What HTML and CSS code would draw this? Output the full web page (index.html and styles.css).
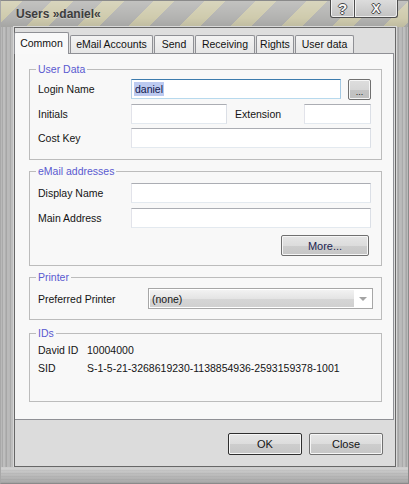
FILE: index.html
```html
<!DOCTYPE html>
<html lang="en">
<head>
<meta charset="utf-8">
<title>Users »daniel«</title>
<link rel="stylesheet" href="styles.css">
</head>
<body>
<div class="window">
  <header class="titlebar">
    <span class="title">Users »daniel«</span>
    <div class="caption">
      <span class="cbtn cbtn-help">?</span>
      <span class="cbtn cbtn-close">X</span>
    </div>
  </header>
  <div class="frame">
    <div class="client">
      <nav class="tabs">
        <span class="tab tab-common active">Common</span>
        <span class="tab tab-email">eMail Accounts</span>
        <span class="tab tab-send">Send</span>
        <span class="tab tab-recv">Receiving</span>
        <span class="tab tab-rights">Rights</span>
        <span class="tab tab-user">User data</span>
      </nav>
      <section class="panel">
        <fieldset class="group g-user">
          <legend>User Data</legend>
          <div class="row r-first">
            <span class="lbl">Login Name</span>
            <span class="input focus w-login"><span class="sel">daniel</span></span>
            <span class="btn dots">...</span>
          </div>
          <div class="row r-gap4">
            <span class="lbl">Initials</span>
            <span class="input w-initials"></span>
            <span class="lbl lbl-ext">Extension</span>
            <span class="input w-ext"></span>
          </div>
          <div class="row r-gap4">
            <span class="lbl">Cost Key</span>
            <span class="input w-full"></span>
          </div>
        </fieldset>
        <fieldset class="group g-mail">
          <legend>eMail addresses</legend>
          <div class="row">
            <span class="lbl">Display Name</span>
            <span class="input w-full"></span>
          </div>
          <div class="row r-gap5">
            <span class="lbl">Main Address</span>
            <span class="input w-full"></span>
          </div>
          <div class="row r-more">
            <span class="btn more">More...</span>
          </div>
        </fieldset>
        <fieldset class="group g-printer">
          <legend>Printer</legend>
          <div class="row">
            <span class="lbl lbl-printer">Preferred Printer</span>
            <span class="combo"><span class="combo-face">(none)</span><span class="combo-arrow"><span class="tri"></span></span></span>
          </div>
        </fieldset>
        <fieldset class="group g-ids">
          <legend>IDs</legend>
          <div class="idrow"><span class="idl">David ID</span><span>10004000</span></div>
          <div class="idrow"><span class="idl">SID</span><span>S-1-5-21-3268619230-1138854936-2593159378-1001</span></div>
        </fieldset>
      </section>
      <footer class="footer">
        <span class="btn dlg default">OK</span>
        <span class="btn dlg">Close</span>
      </footer>
    </div>
  </div>
  <div class="frame-bottom"></div>
</div>
</body>
</html>
```
FILE: styles.css
```css
* { box-sizing: border-box; }
html, body { margin: 0; padding: 0; }
body {
  width: 409px;
  height: 484px;
  overflow: hidden;
  font-family: "Liberation Sans", Arial, sans-serif;
  font-size: 10.5px;
  color: #141414;
  background: #b4b4b4;
}
.window {
  width: 409px;
  height: 484px;
  display: flex;
  flex-direction: column;
  border: 1px solid #8a8a8a;
  border-left-color: #a8a8a8;
}

/* title bar */
.titlebar {
  height: 26px;
  flex: none;
  display: flex;
  justify-content: space-between;
  align-items: flex-start;
  padding-left: 15px;
  background:
    linear-gradient(to bottom, rgba(255,255,255,0.2) 0, rgba(255,255,255,0) 65%, rgba(0,0,0,0.08) 100%),
    repeating-linear-gradient(135deg, #cfcbad 0 15px, #b3b3b1 15px 36px);
}
.title {
  font-weight: bold;
  font-size: 12px;
  line-height: 26px;
  color: #3d3d3d;
  text-shadow: 0 1px 0 rgba(255,255,255,0.3);
}
.caption {
  display: flex;
  margin-top: -1px;
  margin-right: 10px;
}
.cbtn {
  height: 18px;
  display: flex;
  align-items: center;
  justify-content: center;
  border: 1px solid #4d4d4d;
  border-top: none;
  background: linear-gradient(#dcdcdc, #c2c2c2);
  box-shadow: inset 1px 0 #f2f2f2, inset -1px -1px #ececec;
  color: #f8f8f8;
  font-weight: bold;
  text-shadow: 1px 0 #4a4a4a, -1px 0 #4a4a4a, 0 1px #4a4a4a, 0 -1px #4a4a4a;
}
.cbtn-help {
  width: 25px;
  font-size: 15px;
  border-bottom-left-radius: 3px;
}
.cbtn-close {
  width: 43px;
  border-left: none;
  font-size: 13px;
  border-bottom-right-radius: 3px;
}

/* frame */
.frame {
  flex: 1;
  display: flex;
  padding: 0 12px 0 13px;
  background: repeating-linear-gradient(90deg, #b8b8b8 0 1px, #aaaaaa 1px 2px, #bebebe 2px 4px, #b0b0b0 4px 5px, #a6a6a6 5px 6px, #bababa 6px 8px);
}
.frame-bottom {
  height: 16px;
  flex: none;
  background:
    repeating-linear-gradient(0deg, rgba(0,0,0,0.035) 0 1px, rgba(0,0,0,0) 1px 3px),
    linear-gradient(#d4d4d4, #bdbdbd 45%, #a8a8a8);
}
.client {
  flex: 1;
  display: flex;
  flex-direction: column;
  border: 1px solid #676767;
  box-shadow: 0 0 0 1px #d8d8d8;
  background: #dedede;
}

/* tabs */
.tabs {
  height: 25px;
  flex: none;
  display: flex;
  align-items: flex-end;
  gap: 1px;
}
.tab {
  height: 18px;
  line-height: 17px;
  text-align: center;
  border: 1px solid #8f9095;
  border-bottom: none;
  border-radius: 2px 2px 0 0;
  background: linear-gradient(#f3f3f3, #e6e6e6);
  color: #111;
}
.tab.active {
  height: 22px;
  line-height: 21px;
  margin-bottom: -1px;
  margin-left: -1px;
  background: #f9f9f9;
  position: relative;
  z-index: 1;
}
.tab-common { width: 55px; }
.tab-email { width: 83px; }
.tab-send { width: 40px; }
.tab-recv { width: 60px; }
.tab-rights { width: 38px; }
.tab-user { width: 59px; }

/* panel */
.panel {
  flex: 1;
  margin-right: 1px;
  background: #f8f8f8;
  border: 1px solid #8f9095;
  border-left: none;
  padding-top: 9px;
}
.group {
  min-width: 0;
  margin: 0 11px 0 14px;
  border: 1px solid #bcbcbc;
  padding: 3px 10px 11px 8px;
}
.group legend {
  font-size: 10.5px;
  line-height: 13px;
  padding: 0 2px;
  margin-left: -2px;
  color: #5a5ad0;
}
.g-mail { margin-top: 5px; padding-top: 5px; padding-bottom: 9px; }
.g-printer { margin-top: 5px; padding-top: 4px; padding-bottom: 10px; }
.g-ids { margin-top: 7px; padding-top: 1px; padding-bottom: 24px; }

.row {
  display: flex;
  align-items: center;
}
.r-first { align-items: flex-start; height: 21px; }
.r-first .lbl { line-height: 20px; }
.r-gap4 { margin-top: 4px; }
.r-gap5 { margin-top: 5px; }
.r-more { margin-top: 7px; justify-content: flex-end; }

.lbl {
  flex: none;
  width: 93px;
  white-space: nowrap;
}
.lbl-ext { width: 69px; margin-left: 8px; }
.lbl-printer { width: 110px; }

.input {
  display: flex;
  align-items: center;
  height: 20px;
  flex: none;
  background: #fff;
  border: 1px solid;
  border-color: #abadb3 #dbdfe6 #e3e9ef #e2e3ea;
  padding-left: 2px;
}
.input.focus {
  border-color: #3d7bad #a4c9e3 #b7d9ed #b5cfe7;
}
.sel {
  background: #bccaf0;
  color: #10164a;
  line-height: 14px;
  padding: 0 1px;
}
.w-login { width: 210px; }
.w-initials { width: 96px; }
.w-ext { width: 67px; }
.w-full { width: 240px; }

/* buttons */
.btn {
  display: flex;
  align-items: center;
  justify-content: center;
  flex: none;
  border: 1px solid #707070;
  border-radius: 2px;
  background: linear-gradient(#e6e6e6 0, #dcdcdc 50%, #cdcdcd 50%, #c6c6c6 100%);
  box-shadow: inset 0 0 0 1px #f6f6f6;
  color: #141414;
}
.dots {
  width: 23px;
  height: 21px;
  margin-left: 7px;
  align-items: flex-end;
  padding-bottom: 3px;
  line-height: 8px;
  font-size: 9px;
  background: linear-gradient(#dedede 0, #d6d6d6 50%, #c4c4c4 50%, #bfbfbf 100%);
}
.more {
  width: 88px;
  height: 21px;
  margin-right: 2px;
  color: #1c2452;
  font-size: 11px;
  padding-top: 1px;
}

/* combo */
.combo {
  display: flex;
  width: 225px;
  height: 21px;
  margin-right: -2px;
  border: 1px solid #a7a7a7;
  background: #fff;
  padding: 1px 0 1px 1px;
}
.combo-face {
  flex: 1;
  display: flex;
  align-items: center;
  padding-left: 2px;
  background: linear-gradient(#f2f2f2, #e4e4e4 50%, #d6d6d6 51%, #d0d0d0);
}
.combo-arrow {
  width: 18px;
  display: flex;
  align-items: center;
  justify-content: center;
}
.tri {
  width: 0;
  height: 0;
  border-left: 4px solid transparent;
  border-right: 4px solid transparent;
  border-top: 4px solid #a4a4a4;
}

/* ids */
.idrow {
  display: flex;
  height: 18px;
  line-height: 18px;
  white-space: nowrap;
}
.idl { width: 49px; flex: none; }

/* footer */
.footer {
  height: 46px;
  flex: none;
  display: flex;
  justify-content: flex-end;
  align-items: flex-start;
  gap: 7px;
  padding: 13px 12px 0 0;
  background: #dcdcdc;
}
.dlg {
  width: 74px;
  height: 22px;
  font-size: 11px;
}
.dlg.default {
  border-color: #2e2e2e;
}
```
